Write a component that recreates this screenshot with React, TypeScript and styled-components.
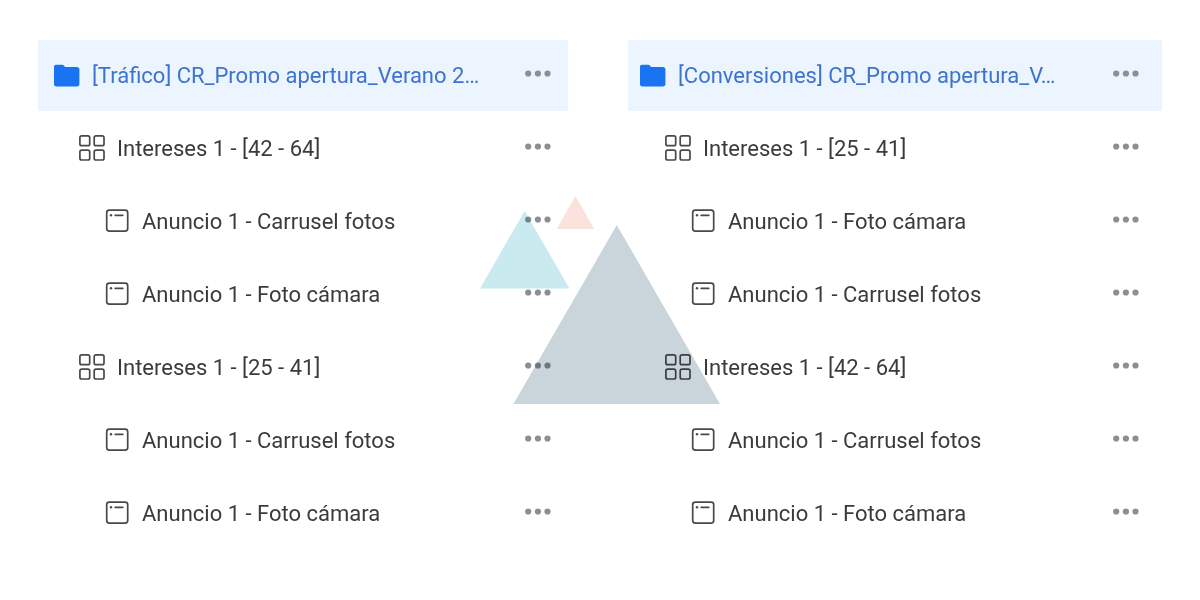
import React from "react";
import styled, { createGlobalStyle } from "styled-components";

type Level = "campaign" | "adset" | "ad";
interface Item {
  level: Level;
  name: string;
}

const left: Item[] = [
  { level: "campaign", name: "[Tráfico] CR_Promo apertura_Verano 2…" },
  { level: "adset", name: "Intereses 1 - [42 - 64]" },
  { level: "ad", name: "Anuncio 1 - Carrusel fotos" },
  { level: "ad", name: "Anuncio 1 - Foto cámara" },
  { level: "adset", name: "Intereses 1 - [25 - 41]" },
  { level: "ad", name: "Anuncio 1 - Carrusel fotos" },
  { level: "ad", name: "Anuncio 1 - Foto cámara" },
];

const right: Item[] = [
  { level: "campaign", name: "[Conversiones] CR_Promo apertura_V…" },
  { level: "adset", name: "Intereses 1 - [25 - 41]" },
  { level: "ad", name: "Anuncio 1 - Foto cámara" },
  { level: "ad", name: "Anuncio 1 - Carrusel fotos" },
  { level: "adset", name: "Intereses 1 - [42 - 64]" },
  { level: "ad", name: "Anuncio 1 - Carrusel fotos" },
  { level: "ad", name: "Anuncio 1 - Foto cámara" },
];

const GlobalStyle = createGlobalStyle`
  *, *::before, *::after { box-sizing: border-box; }
  body {
    margin: 0;
    background: #fff;
    font-family: Roboto, "Liberation Sans", sans-serif;
  }
`;

const Page = styled.main`
  position: relative;
  display: grid;
  grid-template-columns: 530fr 534fr;
  gap: 60px;
  padding: 40px 38px;
`;

const Tree = styled.ul<{ $start: number; $end: number }>`
  display: flex;
  flex-direction: column;
  gap: 2px;
  min-width: 0;
  margin: 0;
  padding: 0;
  list-style: none;
  --start: ${(p) => p.$start}px;
  --end: ${(p) => p.$end}px;
`;

const steps: Record<Level, number> = { campaign: 0, adset: 25, ad: 51 };

const Row = styled.li<{ $level: Level }>`
  display: flex;
  align-items: center;
  gap: 12px;
  height: 71px;
  padding-left: calc(var(--start) + ${(p) => steps[p.$level]}px);
  padding-right: var(--end);
  background: ${(p) => (p.$level === "campaign" ? "#ecf5fe" : "transparent")};
  color: ${(p) => (p.$level === "campaign" ? "#3d73d0" : "#3a3b3d")};
`;

const Name = styled.a`
  flex: 1;
  min-width: 0;
  overflow: hidden;
  color: inherit;
  font-size: 22px;
  line-height: 32px;
  text-decoration: none;
  text-overflow: ellipsis;
  white-space: nowrap;
`;

const MoreButton = styled.button`
  display: flex;
  flex: none;
  padding: 4px;
  padding-bottom: 8px;
  border: 0;
  background: none;
  color: #8b8e93;
  cursor: pointer;
`;

const Icon = styled.svg`
  display: block;
  flex: none;
`;

const Watermark = styled.svg`
  position: absolute;
  top: 196px;
  left: calc(50% - 120px);
  mix-blend-mode: multiply;
  pointer-events: none;
`;

function LevelIcon({ level }: { level: Level }) {
  if (level === "campaign") {
    return (
      <Icon width="26" height="24" viewBox="0 0 26 24" aria-hidden="true">
        <path
          fill="#1a73f0"
          d="M2.4 .8h5.8c.8 0 1.4.3 1.9.9l1 1.3h11.7a2.6 2.6 0 0 1 2.6 2.6V19.800a2.600 2.600 0 0 1-2.600 2.600H2.400a2.600 2.600 0 0 1-2.600-2.600V3.400a2.600 2.600 0 0 1 2.600-2.600z"
        />
      </Icon>
    );
  }
  if (level === "adset") {
    return (
      <Icon width="26" height="27" viewBox="0 0 26 27" fill="none" stroke="#48494b" strokeWidth="1.7" aria-hidden="true">
        <rect x=".9" y=".9" width="9.800" height="9.800" rx="1.8" />
        <rect x="15.2" y=".9" width="9.800" height="9.800" rx="1.8" />
        <rect x=".9" y="15.2" width="9.800" height="9.800" rx="1.8" />
        <rect x="15.2" y="15.2" width="9.800" height="9.800" rx="1.8" />
      </Icon>
    );
  }
  return (
    <Icon width="25" height="25" viewBox="0 0 25 25" fill="none" stroke="#48494b" strokeWidth="1.7" strokeLinecap="round" aria-hidden="true">
      <rect x="1.700" y="1.200" width="21" height="21" rx="2.600" />
      <path d="M10.200 6.300h7.600" />
      <circle cx="6" cy="6.300" r="1.200" fill="#48494b" stroke="none" />
    </Icon>
  );
}

function CampaignTree({ items, start, end }: { items: Item[]; start: number; end: number }) {
  return (
    <Tree $start={start} $end={end}>
      {items.map((item, i) => (
        <Row key={i} $level={item.level}>
          <LevelIcon level={item.level} />
          <Name href="#">{item.name}</Name>
          <MoreButton type="button" aria-label={`Más opciones: ${item.name}`}>
            <Icon width="27" height="7" viewBox="0 0 27 7" fill="currentColor" aria-hidden="true">
              <circle cx="3.2" cy="3.5" r="3.1" />
              <circle cx="12.9" cy="3.5" r="3.1" />
              <circle cx="22.5" cy="3.5" r="3.1" />
            </Icon>
          </MoreButton>
        </Row>
      ))}
    </Tree>
  );
}

export default function App() {
  return (
    <>
      <GlobalStyle />
      <Page>
        <CampaignTree items={left} start={16} end={12} />
        <CampaignTree items={right} start={12} end={18} />
        <Watermark width="240" height="208" viewBox="0 0 240 208" aria-hidden="true">
          <path fill="#c9ebef" d="M44.6 15 89.5 92.4H0z" />
          <path fill="#fce2dd" d="M95.4 0 114.4 33H76.6z" />
          <path fill="#cad5db" d="M136.8 29 240 208H33.4z" />
        </Watermark>
      </Page>
    </>
  );
}
